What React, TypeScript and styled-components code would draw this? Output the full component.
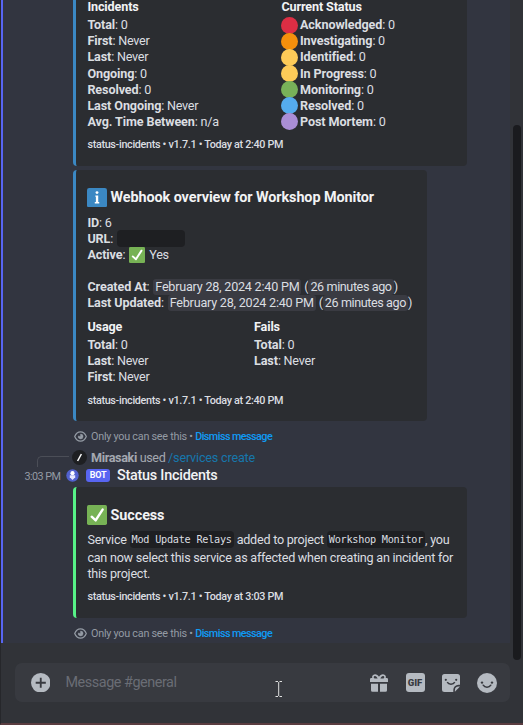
import React from "react";
import styled, { createGlobalStyle } from "styled-components";

const GlobalStyle = createGlobalStyle`
  * { box-sizing: border-box; }
  html, body { margin: 0; padding: 0; background: #313338; overflow: hidden; }
  body {
    font-family: Roboto, "Noto Sans", sans-serif;
    font-size: 12.6px;
    letter-spacing: -0.24px;
    color: #dbdee1;
  }
  svg { display: block; flex: none; }
`;

const Window = styled.div`
  width: 523px;
  height: 725px;
  display: flex;
  flex-direction: column;
  border-left: 1px solid #26272b;
  border-bottom: 2px solid #5a3c40;
  overflow: hidden;
`;

const Body = styled.div`
  position: relative;
  flex: 1;
  display: flex;
  flex-direction: column;
`;

const Feed = styled.main`
  width: 509px;
  height: 643px;
  background: #323540;
  border-left: 2px solid #5865f2;
  display: flex;
  flex-direction: column;
  flex: none;
  overflow: hidden;
  > * { flex: none; }
`;

const ScrollThumb = styled.div`
  position: absolute;
  right: 2px;
  top: 125px;
  width: 8px;
  height: 535px;
  border-radius: 4px;
  background: #1a1b1e;
`;

const Embed = styled.article<{ $accent: string; $w: number; $h: number; $open?: boolean }>`
  width: ${(p) => p.$w}px;
  height: ${(p) => p.$h}px;
  margin-left: 70px;
  padding-left: 11.4px;
  background: #2b2d31;
  border-left: 3px solid ${(p) => p.$accent};
  border-radius: ${(p) => (p.$open ? "0 0 4px 4px" : "4px")};
  display: flex;
  flex-direction: column;
  white-space: pre;
  & + & { margin-top: 4px; }
`;

const Columns = styled.div<{ $first: number; $lift?: number }>`
  display: grid;
  margin-top: ${(p) => -(p.$lift ?? 0)}px;
  grid-template-columns: ${(p) => p.$first}px 1fr;
`;

const FieldName = styled.h3`
  margin: 0 0 2px;
  height: 16px;
  line-height: 16px;
  font-size: 12.6px;
  font-weight: 700;
  letter-spacing: -0.12px;
  color: #f2f3f5;
`;

const Line = styled.div<{ $h?: number }>`
  height: ${(p) => p.$h ?? 16.1}px;
  display: flex;
  align-items: center;
  line-height: 16px;
`;

const Description = styled.div`
  margin-top: 5px;
`;

const Label = styled.strong`
  font-weight: 700;
  letter-spacing: -0.1px;
`;

const Dot = styled.i<{ $c: string }>`
  width: 17px;
  height: 17px;
  margin: 0 2px 0 -0.4px;
  border-radius: 50%;
  background: ${(p) => p.$c};
  flex: none;
`;

const EmbedTitle = styled.h2<{ $top: number }>`
  margin: ${(p) => p.$top}px 0 0;
  height: 20px;
  display: flex;
  align-items: center;
  gap: 3.2px;
  font-size: 14.4px;
  font-weight: 700;
  letter-spacing: -0.09px;
  color: #f2f3f5;
`;

const Details = styled.div`
  margin: 7px 0 8px;
`;

const Footer = styled.footer<{ $top: number }>`
  margin-top: ${(p) => p.$top}px;
  height: 14px;
  line-height: 14px;
  font-size: 10.8px;
  font-weight: 500;
  letter-spacing: -0.32px;
`;

const Redacted = styled.span`
  width: 68px;
  height: 17px;
  margin-left: 1px;
  border-radius: 4px;
  background: #1e1f22;
`;

const Yes = styled.span`
  display: flex;
  align-items: center;
  gap: 4px;
  margin-left: 1px;
`;

const Timestamp = styled.time<{ $relative?: boolean }>`
  padding: 0 2px;
  margin-left: ${(p) => (p.$relative ? 0 : 1)}px;
  height: 16px;
  border-radius: 3px;
  background: #3a3b42;
  letter-spacing: ${(p) => (p.$relative ? -0.4 : -0.22)}px;
`;

const Code = styled.code`
  height: 17px;
  line-height: 17px;
  padding: 0 2px;
  border-radius: 4px;
  background: #1e1f22;
  font-family: "DejaVu Sans Mono", "Liberation Mono", monospace;
  font-size: 10.2px;
  letter-spacing: -0.24px;
`;

const EphemeralRow = styled.div`
  height: 27px;
  padding: 3px 0 0 71px;
  display: flex;
  align-items: center;
  white-space: pre;
  font-size: 10.8px;
  letter-spacing: -0.25px;
  color: #949ba4;
  svg { margin-right: 4px; }
`;

const Dismiss = styled.a`
  color: #0f9bf5;
  letter-spacing: -0.56px;
  font-weight: 500;
`;

const ReplyRow = styled.div`
  height: 15px;
  margin-top: 1.5px;
  padding-left: 34px;
  display: flex;
  align-items: center;
  white-space: pre;
  letter-spacing: -0.4px;
  color: #a4a8b0;
`;

const Username = styled.strong`
  font-weight: 700;
  letter-spacing: -0.35px;
`;

const Spine = styled.i`
  width: 32px;
  height: 11px;
  margin: 9px 3px 0 0;
  border: solid #4b4e57;
  border-width: 1px 0 0 1px;
  border-top-left-radius: 5px;
`;

const CommandBadge = styled.span`
  width: 15px;
  height: 15px;
  margin-right: 4px;
  border-radius: 50%;
  background: #1e1f22;
  display: grid;
  place-items: center;
`;

const Command = styled.span`
  color: #1677ac;
  letter-spacing: -0.18px;
`;

const AuthorRow = styled.div`
  height: 22.5px;
  padding-left: 21px;
  display: flex;
  align-items: center;
  white-space: pre;
`;

const SentAt = styled.time`
  width: 41.5px;
  padding: 2px 0 0 0.5px;
  font-size: 10.8px;
  letter-spacing: -0.55px;
  color: #949ba4;
`;

const BotTag = styled.span`
  width: 24px;
  height: 13px;
  margin: 0 7px 0 7.5px;
  border-radius: 3px;
  background: #5865f2;
  color: #fff;
  font-size: 9px;
  font-weight: 700;
  line-height: 13px;
  text-align: center;
`;

const Author = styled.span`
  font-size: 14.4px;
  font-weight: 500;
  letter-spacing: -0.24px;
  color: #f2f3f5;
`;

const Composer = styled.div`
  width: 495px;
  height: 39px;
  margin: 20px 0 0 14px;
  padding: 0 13px 0 15.5px;
  border-radius: 7px;
  background: #383a40;
  display: flex;
  align-items: center;
  color: #b5bac1;
`;

const Placeholder = styled.span`
  flex: 1;
  margin-left: 15.5px;
  font-size: 14.4px;
  letter-spacing: -0.45px;
  color: #6a6d75;
`;

const Tools = styled.div`
  display: flex;
  align-items: center;
  gap: 16px;
`;

const Gif = styled.span`
  width: 19px;
  height: 19px;
  margin: 0 0.5px;
  border-radius: 3px;
  background: #b5bac1;
  color: #383a40;
  font-size: 9.5px;
  font-weight: 900;
  line-height: 19px;
  letter-spacing: 0;
  text-align: center;
`;

const TextCursor = styled.svg`
  position: absolute;
  left: 274px;
  top: 681px;
`;

const CheckEmoji = ({ size }: { size: number }) => (
  <svg width={size} height={size} viewBox="0 0 36 36">
    <rect width="36" height="36" rx="3" fill="#77b255" />
    <path d="M29.3 6.4a2.2 2.2 0 0 0-3 .6L15.1 24.3l-5.2-4.8a2.2 2.2 0 0 0-3 3.2l7.3 6.7a2.2 2.2 0 0 0 3.2-.5L29.9 9.4a2.2 2.2 0 0 0-.6-3z" fill="#fff" />
  </svg>
);

const InfoEmoji = () => (
  <svg width="20" height="19.5" viewBox="0 0 36 36" preserveAspectRatio="none">
    <rect width="36" height="36" rx="4" fill="#3b88c3" />
    <circle cx="18" cy="8.5" r="2.6" fill="#fff" />
    <path d="M15 14h5.2v12H22v2.4h-8V26h2v-9.8h-1z" fill="#fff" />
  </svg>
);

const Eye = () => (
  <svg width="13" height="11" viewBox="0 0 13 11" fill="none" stroke="#949ba4">
    <path d="M.7 5.5C2 2.3 4.1.9 6.5.9s4.5 1.4 5.8 4.6c-1.3 3.2-3.4 4.6-5.8 4.6S2 8.7.7 5.5z" strokeWidth="1.2" />
    <path d="M6.6 3.1 6.5 5.5 4.3 5a2.4 2.4 0 1 0 2.3-1.9z" fill="#949ba4" strokeWidth=".5" />
  </svg>
);

const Ephemeral = () => (
  <EphemeralRow>
    <Eye />
    Only you can see this • <Dismiss>Dismiss message</Dismiss>
  </EphemeralRow>
);

const Stat = ({ name, value, dot }: { name: string; value: string; dot?: string }) => (
  <Line>
    {dot && <Dot $c={dot} />}
    <Label>{name}</Label>: {value}
  </Line>
);

const When = ({ name }: { name: string }) => (
  <Line>
    <Label>{name}</Label>: <Timestamp>February 28, 2024 2:40 PM</Timestamp> (<Timestamp $relative>26 minutes ago</Timestamp>)
  </Line>
);

const incidents = [
  ["Total", "0"], ["First", "Never"], ["Last", "Never"], ["Ongoing", "0"],
  ["Resolved", "0"], ["Last Ongoing", "Never"], ["Avg. Time Between", "n/a"],
];

const statuses = [
  ["Acknowledged", "#dd2e44"], ["Investigating", "#f4900c"], ["Identified", "#fdcb58"],
  ["In Progress", "#fdcb58"], ["Monitoring", "#78b159"], ["Resolved", "#55acee"], ["Post Mortem", "#aa8ed6"],
];

export default function App() {
  return (
    <>
      <GlobalStyle />
      <Window>
        <Body>
          <Feed>
            <Embed $accent="#3b88c3" $w={394} $h={166} $open>
              <Columns $first={194} $lift={0.8}>
                <div>
                  <FieldName>Incidents</FieldName>
                  {incidents.map(([n, v]) => <Stat key={n} name={n} value={v} />)}
                </div>
                <div>
                  <FieldName>Current Status</FieldName>
                  {statuses.map(([n, c]) => <Stat key={n} name={n} value="0" dot={c} />)}
                </div>
              </Columns>
              <Footer $top={8}>status-incidents • v1.7.1 • Today at 2:40 PM</Footer>
            </Embed>

            <Embed $accent="#3b88c3" $w={354} $h={251}>
              <EmbedTitle $top={17.5}><InfoEmoji />Webhook overview for Workshop Monitor</EmbedTitle>
              <Details>
                <Line><Label>ID</Label>: 6</Line>
                <Line><Label>URL</Label>: <Redacted /></Line>
                <Line><Label>Active</Label>: <Yes><CheckEmoji size={16} />Yes</Yes></Line>
                <Line />
                <When name="Created At" />
                <When name="Last Updated" />
              </Details>
              <Columns $first={166.6}>
                <div>
                  <FieldName>Usage</FieldName>
                  <Stat name="Total" value="0" />
                  <Stat name="Last" value="Never" />
                  <Stat name="First" value="Never" />
                </div>
                <div>
                  <FieldName>Fails</FieldName>
                  <Stat name="Total" value="0" />
                  <Stat name="Last" value="Never" />
                </div>
              </Columns>
              <Footer $top={8.5}>status-incidents • v1.7.1 • Today at 2:40 PM</Footer>
            </Embed>
            <Ephemeral />

            <ReplyRow>
              <Spine />
              <CommandBadge>
                <svg width="7" height="9" viewBox="0 0 7 9"><path d="M5.4 1 1.6 8" stroke="#fff" strokeWidth="1.5" /></svg>
              </CommandBadge>
              <Username>Mirasaki</Username> used <Command>/services create</Command>
            </ReplyRow>
            <AuthorRow>
              <SentAt>3:03 PM</SentAt>
              <svg width="13" height="13" viewBox="0 0 13 13">
                <circle cx="6.5" cy="6.5" r="6.2" fill="#5261cf" />
                <circle cx="6.5" cy="4.2" r="2.1" fill="#fff" />
                <path d="M3.8 6.3h5.4v1.9L6.5 11 3.8 8.2z" fill="#e6e8ff" />
              </svg>
              <BotTag>BOT</BotTag>
              <Author>Status Incidents</Author>
            </AuthorRow>

            <Embed $accent="#57f287" $w={394} $h={131}>
              <EmbedTitle $top={18}><CheckEmoji size={20} />Success</EmbedTitle>
              <Description>
                <Line $h={19.5}>Service <Code>Mod Update Relays</Code> added to project <Code>Workshop Monitor</Code>, you</Line>
                <Line>can now select this service as affected when creating an incident for</Line>
                <Line>this project.</Line>
              </Description>
              <Footer $top={8}>status-incidents • v1.7.1 • Today at 3:03 PM</Footer>
            </Embed>
            <Ephemeral />
          </Feed>
          <ScrollThumb />
          <Composer>
            <svg width="19.5" height="19.5" viewBox="0 0 20 20">
              <circle cx="10" cy="10" r="10" fill="#b5bac1" />
              <path d="M10 4.8v10.4M4.8 10h10.4" stroke="#383a40" strokeWidth="1.9" />
            </svg>
            <Placeholder>Message #general</Placeholder>
            <Tools>
              <svg width="20" height="20" viewBox="0 0 20 20" fill="#b5bac1">
                <path fillRule="evenodd" d="M1 7.5V6.2A1.2 1.2 0 0 1 2.2 5h1A3.2 3.2 0 0 1 6 1.2c1.800 0 3 1 4 2.600 1-1.600 2.200-2.600 4-2.600A3.200 3.200 0 0 1 16.800 5h1A1.200 1.200 0 0 1 19 6.200V9H1zM6 3a1.300 1.300 0 0 0 0 2.600h2.600C8 4 7.100 3 6 3zm8 0c-1.100 0-2 1-2.600 2.600H14A1.300 1.300 0 0 0 14 3z" />
                <path d="M2 10.800h7v8H3.500A1.500 1.500 0 0 1 2 17.300zM11 10.800h7v6.500a1.500 1.500 0 0 1-1.500 1.500H11z" />
              </svg>
              <Gif>GIF</Gif>
              <svg width="20" height="20" viewBox="0 0 20 20">
                <path d="M3.5 1h13A2.500 2.500 0 0 1 19 3.500v8.300h-1.500a5.200 5.200 0 0 0-5.200 5.200v2H3.500A2.500 2.500 0 0 1 1 16.500v-13A2.500 2.500 0 0 1 3.500 1z" fill="#b5bac1" />
                <path d="M13.900 18.700v-1.500a3.700 3.700 0 0 1 3.700-3.700H19z" fill="#b5bac1" />
                <circle cx="4.800" cy="6.800" r="1.100" fill="#383a40" /><circle cx="15.200" cy="6.800" r="1.100" fill="#383a40" />
                <path d="M6.200 9.200c1.600 2.800 6 2.800 7.600 0" fill="none" stroke="#383a40" strokeWidth="1.500" />
              </svg>
              <svg width="20" height="20" viewBox="0 0 20 20">
                <circle cx="10" cy="10" r="10" fill="#b5bac1" />
                <circle cx="5" cy="9.600" r="1.200" fill="#383a40" /><circle cx="15" cy="9.600" r="1.200" fill="#383a40" />
                <path d="M6.200 12.200c1.700 2.800 5.900 2.800 7.600 0" fill="none" stroke="#383a40" strokeWidth="1.500" strokeLinecap="round" />
              </svg>
            </Tools>
          </Composer>
          <TextCursor width="8" height="17" viewBox="0 0 8 17" fill="none" stroke="#e0e0e0" strokeWidth="1">
            <path d="M.5.5H3M4.500.5H7M.5 15.500H3M4.500 15.500H7M3.700 1v14" />
          </TextCursor>
        </Body>
      </Window>
    </>
  );
}
